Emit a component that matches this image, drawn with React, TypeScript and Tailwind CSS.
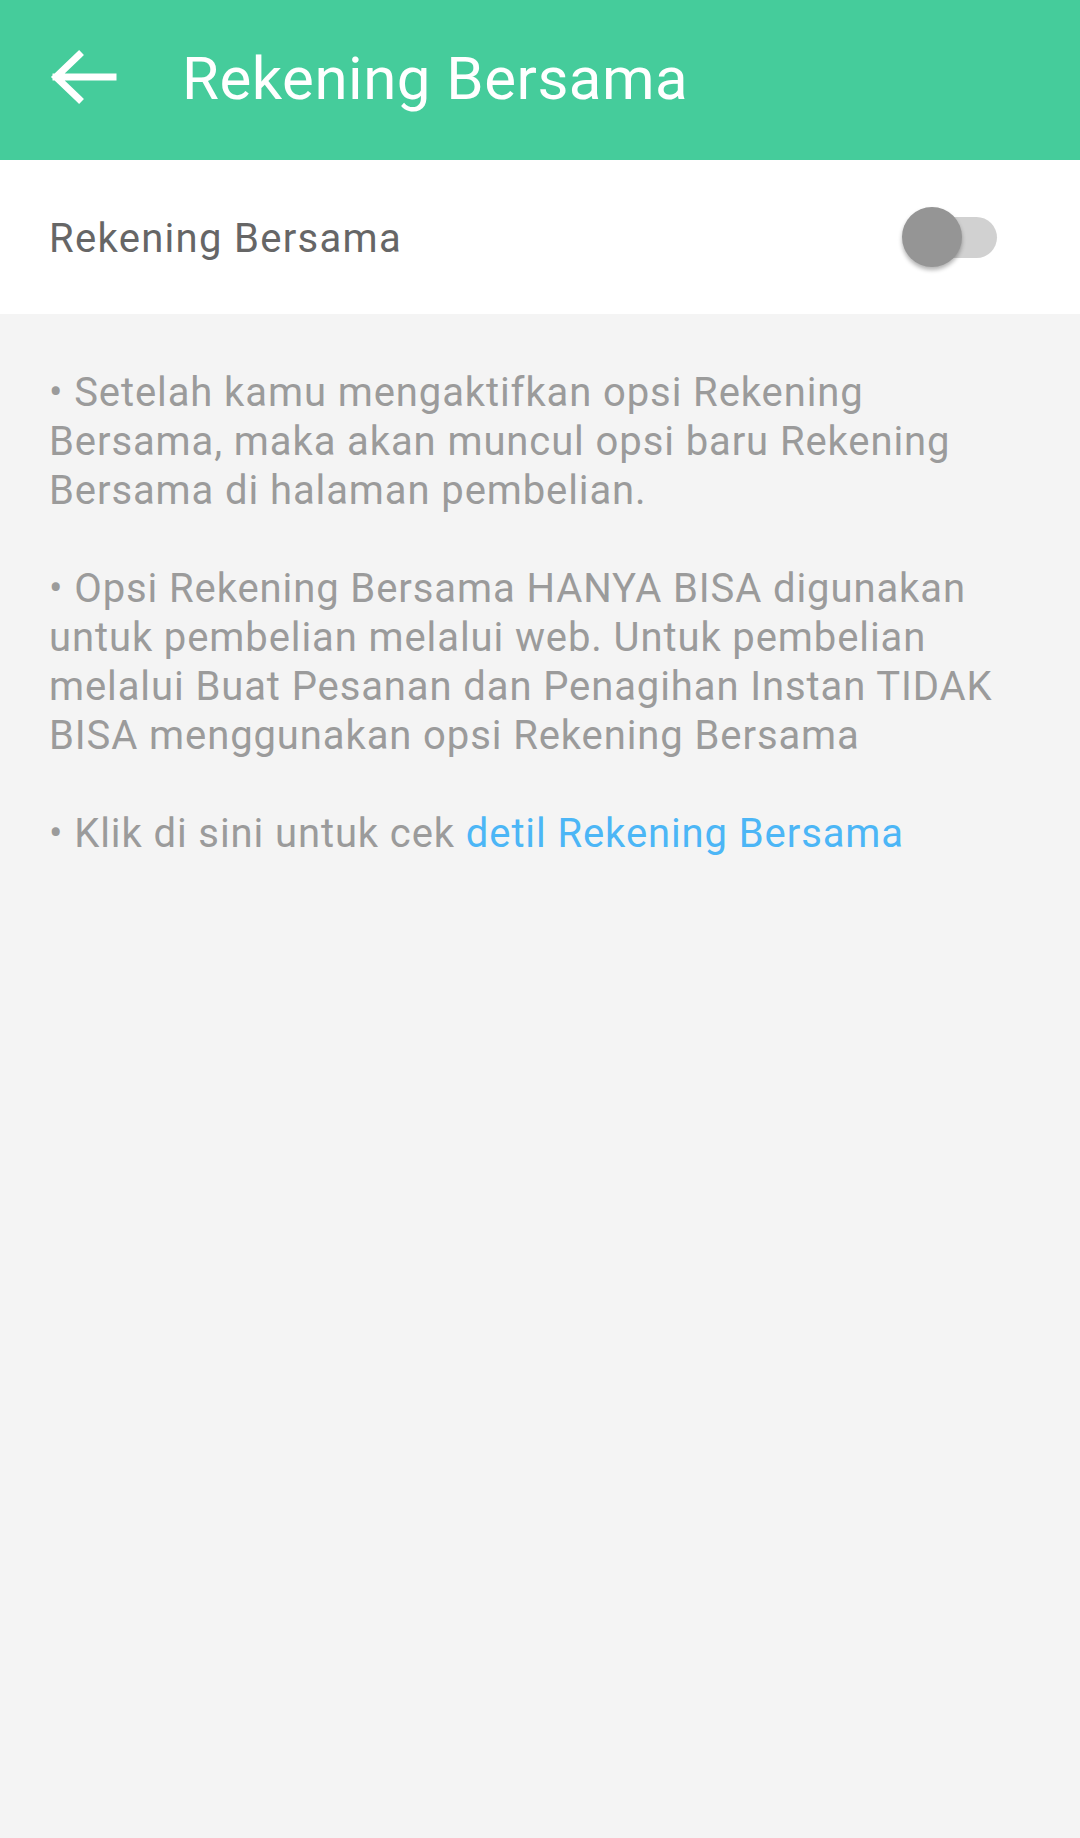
const BackArrow = () => (
    <svg width="80" height="60" viewBox="0 0 80 60" className="block">
        <path
            d="M30 8 L7 30 L30 52 M7 30 L64 30"
            fill="none"
            stroke="white"
            strokeWidth="7"
            strokeLinecap="square"
            strokeLinejoin="miter"
        />
    </svg>
);

const Toggle = () => (
    <div className="relative w-[95px] h-[60px]">
        <div className="absolute left-[5px] top-[10px] w-[90px] h-[41px] rounded-full bg-[#d1d1d1]" />
        <div className="absolute left-0 top-0 w-[60px] h-[60px] rounded-full bg-[#959595] shadow-[0_3px_4px_rgba(0,0,0,0.3)]" />
    </div>
);

export default function App() {
    return (
        <div
            className="min-h-[1838px] w-full bg-[#f4f4f4]"
            style={{ fontFamily: "Roboto, 'Liberation Sans', sans-serif" }}
        >
            <div className="h-[160px] bg-[#45cc9b] flex items-center">
                <div className="pl-[49px] pb-[6px]">
                    <BackArrow />
                </div>
                <div className="ml-[53px] text-white text-[60px] leading-none tracking-[0.5px] pb-[2px]">
                    Rekening Bersama
                </div>
            </div>
            <div className="h-[154px] bg-white flex items-center justify-between pl-[49px] pr-[83px]">
                <div className="text-[#666666] text-[40px] leading-none tracking-[1.3px] pt-[4px]">
                    Rekening Bersama
                </div>
                <Toggle />
            </div>
            <div className="pl-[49px] pr-[49px] pt-[54px] text-[40px] leading-[49px] tracking-[0.9px] text-[#9b9b9b]">
                <p>
                    • Setelah kamu mengaktifkan opsi Rekening Bersama, maka akan muncul opsi baru
                    Rekening Bersama di halaman pembelian.
                </p>
                <p className="mt-[49px]">
                    • Opsi Rekening Bersama HANYA BISA digunakan untuk pembelian melalui web. Untuk
                    pembelian melalui Buat Pesanan dan Penagihan Instan TIDAK BISA menggunakan opsi
                    Rekening Bersama
                </p>
                <p className="mt-[49px]">
                    • Klik di sini untuk cek{" "}
                    <span className="text-[#4cb6f6]">detil Rekening Bersama</span>
                </p>
            </div>
        </div>
    );
}
